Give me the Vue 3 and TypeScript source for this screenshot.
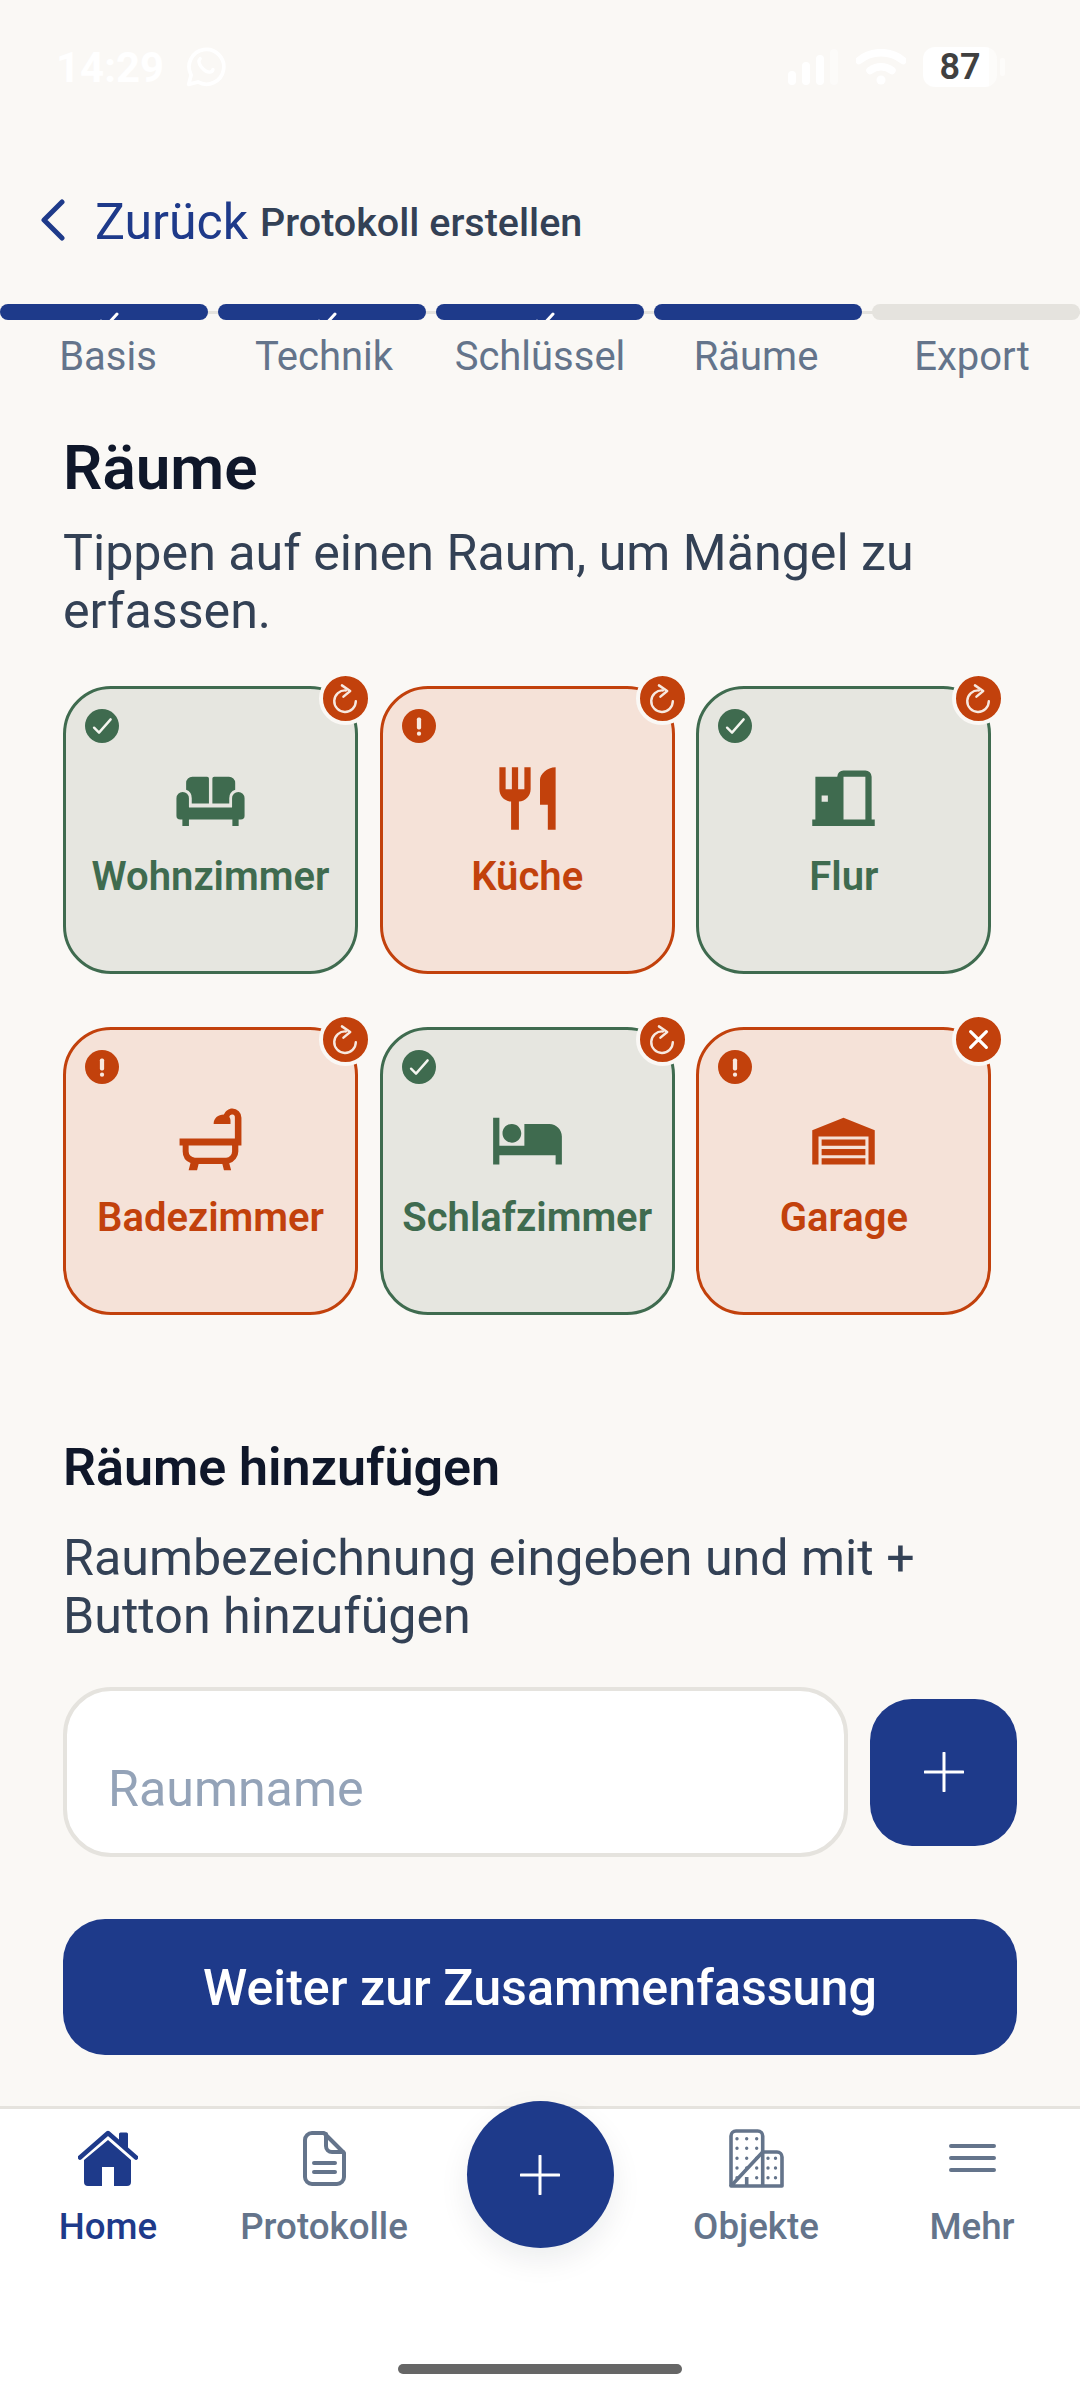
<template>
  <div class="screen">
    <div class="status-bar">
      <div class="status-left">
        <span class="time">14:29</span>
        <svg class="whatsapp" viewBox="0 0 38 38" fill="none" stroke="#fff" stroke-width="3.5" stroke-linejoin="round">
          <path d="M2.500 35.500l2.400-8.800A16.500 16.500 0 1 1 11.300 33.200z" />
          <path d="M13.500 11c-1.800 1.800-1.300 5 1.200 8.200 2.800 3.300 6.200 5.200 8.700 4.500 1.500-.4 2.200-1.400 2.200-2.500" stroke-width="3.200" stroke-linecap="round" />
        </svg>
      </div>
      <div class="status-right">
        <svg class="signal" viewBox="0 0 50 36" fill="#fff">
          <rect x="0" y="22" width="8" height="14" rx="4" />
          <rect x="14" y="13" width="8" height="23" rx="4" />
          <rect x="28" y="6" width="8" height="30" rx="4" />
          <rect x="42" y="0" width="8" height="36" rx="4" opacity="0.4" />
        </svg>
        <svg class="wifi" viewBox="0 0 50 36" fill="none" stroke="#fff" stroke-width="7.5" stroke-linecap="round">
          <path d="M3 11.500C15 1 35 1 47 11.500" />
          <path d="M14 21.500c6.500-5 15.500-5 22 0" />
          <circle cx="25" cy="31" r="4.500" fill="#fff" stroke="none" />
        </svg>
        <div class="battery">87</div>
        <div class="battery-cap"></div>
      </div>
    </div>

    <header class="top-bar">
      <svg class="chevron" viewBox="0 0 26 42" fill="none" stroke="#1e3a8a" stroke-width="5" stroke-linecap="round" stroke-linejoin="round">
        <path d="M22 3L4 21l18 18" />
      </svg>
      <span class="back-label">Zurück</span>
      <span class="top-title">Protokoll erstellen</span>
    </header>

    <div class="step-bars">
      <div v-for="step in steps" :key="step.label" :class="['step-bar', { done: step.active }]">
        <svg v-if="step.checked" class="step-check" viewBox="0 0 24 24" fill="none" stroke="#fff" stroke-width="3" stroke-linecap="round">
          <path d="M4 13l5 5L20 6" />
        </svg>
      </div>
    </div>
    <div class="step-labels">
      <span v-for="step in steps" :key="step.label">{{ step.label }}</span>
    </div>

    <main class="content">
      <h1 class="title">Räume</h1>
      <p class="hint">Tippen auf einen Raum, um Mängel zu erfassen.</p>

      <div class="room-grid">
        <div v-for="room in rooms" :key="room.name" :class="['room', room.ok ? 'ok' : 'bad']">
          <span class="status-dot">
            <svg v-if="room.ok" viewBox="0 0 24 24" fill="none" stroke="#f5f5f0" stroke-width="1.7" stroke-linecap="round" stroke-linejoin="round">
              <path d="M6.400 13.200l3.500 3.500 8.200-9.400" />
            </svg>
            <svg v-else viewBox="0 0 24 24" fill="#f8e8df">
              <rect x="10.500" y="6" width="3" height="8.500" rx="1.200" />
              <circle cx="12" cy="17.400" r="1.500" />
            </svg>
          </span>
          <span class="corner">
            <svg v-if="room.removable" viewBox="0 0 24 24" fill="none" stroke="#fff" stroke-width="1.700" stroke-linecap="round">
              <path d="M7.800 7.800l8.400 8.400M16.200 7.800l-8.400 8.400" />
            </svg>
            <svg v-else viewBox="0 0 24 24" fill="none" stroke="#f7e9e1" stroke-width="1.300" stroke-linecap="round" stroke-linejoin="round">
              <path d="M12.200 7.700A5.750 5.750 0 1 0 17.500 13.400" />
              <path d="M10.100 5l4.400 3-3.600 3" />
            </svg>
          </span>
          <svg class="room-icon" viewBox="0 0 24 24" fill="currentColor">
            <path :d="room.icon" fill-rule="evenodd" />
          </svg>
          <span class="room-name">{{ room.name }}</span>
        </div>
      </div>

      <h2 class="subtitle">Räume hinzufügen</h2>
      <p class="hint hint-add">Raumbezeichnung eingeben und mit + Button hinzufügen</p>

      <div class="add-row">
        <div class="room-input">Raumname</div>
        <button class="add-btn">
          <svg viewBox="0 0 40 40" stroke="#fff" stroke-width="3" stroke-linecap="round">
            <path d="M20 1v38M1 20h38" />
          </svg>
        </button>
      </div>

      <button class="next-btn">Weiter zur Zusammenfassung</button>
    </main>

    <nav class="tab-bar">
      <div class="tab active">
        <div class="tab-icon">
          <svg width="60" height="56" viewBox="0 0 60 56" fill="#1e3a8a">
            <path d="M41 4a1.500 1.500 0 0 1 1.500-1.500h6A1.500 1.500 0 0 1 50 4v17l-9-8z" />
            <path d="M30 10l23 20v22a4 4 0 0 1-4 4H36V37H24v19H10a4 4 0 0 1-4-4V30z" />
            <path d="M2 27.500L30 3l28 24.500" fill="none" stroke="#1e3a8a" stroke-width="4.500" stroke-linecap="round" stroke-linejoin="round" />
          </svg>
        </div>
        <span>Home</span>
      </div>
      <div class="tab">
        <div class="tab-icon">
          <svg width="43" height="55" viewBox="0 0 43 55" fill="none" stroke="#64748b" stroke-width="4" stroke-linejoin="round" stroke-linecap="round">
            <path d="M9 2h12l20 20v24a7 7 0 0 1-7 7H9a7 7 0 0 1-7-7V9a7 7 0 0 1 7-7z" />
            <path d="M23 3v12a6 6 0 0 0 6 6h11" />
            <path d="M11 32h21M11 41h21" />
          </svg>
        </div>
        <span>Protokolle</span>
      </div>
      <div class="tab fab-slot">
        <button class="fab">
          <svg viewBox="0 0 40 40" stroke="#fff" stroke-width="3" stroke-linecap="round">
            <path d="M20 1v38M1 20h38" />
          </svg>
        </button>
      </div>
      <div class="tab">
        <div class="tab-icon">
          <svg width="55" height="59" viewBox="0 0 55 59" fill="none" stroke="#64748b" stroke-width="3.600" stroke-linejoin="round">
            <path d="M2 57V7a5 5 0 0 1 5-5h21.700a5 5 0 0 1 5 5v50" />
            <path d="M33.700 23H48a5 5 0 0 1 5 5v29H2z" />
            <path d="M17.700 48v9" />
            <path d="M8 9.700v.01M17.700 9.700v.01M27.700 9.700v.01M8 19.300v.01M17.700 19.300v.01M27.700 19.300v.01M8 29.300v.01M17.700 29.300v.01M27.700 29.300v.01M8 39v.01M17.700 39v.01M27.700 39v.01M8 48.700v.01M27.700 48.700v.01M39 29.300v.01M46.500 29.300v.01M39 39v.01M46.500 39v.01M39 48.700v.01M46.500 48.700v.01" stroke-width="3.400" stroke-linecap="round" />
          </svg>
        </div>
        <span>Objekte</span>
      </div>
      <div class="tab">
        <div class="tab-icon">
          <svg width="47" height="32" viewBox="0 0 47 32" stroke="#64748b" stroke-width="4" stroke-linecap="round">
            <path d="M2 4h43M2 16h43M2 28h43" />
          </svg>
        </div>
        <span>Mehr</span>
      </div>
    </nav>
    <div class="home-indicator"></div>
  </div>
</template>

<script setup lang="ts">
interface Step {
  label: string
  active: boolean
  checked: boolean
}

interface Room {
  name: string
  ok: boolean
  removable?: boolean
  icon: string
}

const steps: Step[] = [
  { label: 'Basis', active: true, checked: true },
  { label: 'Technik', active: true, checked: true },
  { label: 'Schlüssel', active: true, checked: true },
  { label: 'Räume', active: true, checked: false },
  { label: 'Export', active: false, checked: false },
]

const sofa =
  'M4.200 7a2 2 0 0 1 2-2h4.700a.6.6 0 0 1 .6.6v8H6v-1.700a2.800 2.800 0 0 0-1.800-2.700zM12.600 5.600a.6.6 0 0 1 .6-.6h4.700a2 2 0 0 1 2 2v2.200a2.800 2.800 0 0 0-1.900 2.700v1.700h-5.400zM1.100 11.900a2 2 0 0 1 4 0v3h13.800v-3a2 2 0 0 1 4 0v5.600a1.200 1.200 0 0 1-1.200 1.200H21v2.100h-2v-2.100H5.100v2.100H3v-2.100h-.7a1.200 1.200 0 0 1-1.200-1.200z'
const cutlery =
  'M11 9H9V2H7v7H5V2H3v7c0 2.120 1.660 3.840 3.750 3.970V22h2.500v-9.030C11.340 12.840 13 11.120 13 9V2h-2v7zm5-3v8h2.500v8H21V2c-2.760 0-5 2.240-5 4z'
const door =
  'M3 5h7a2 2 0 0 1 2-2h7a2 2 0 0 1 2 2v13.700h1v2.100H2v-2.100h1zM12 5v13.700h7V5zM5 11v2h2v-2z'
const bath =
  'M13 7c0-1.800 1.400-3 3.300-3 .5-1.100 1.500-1.900 2.700-1.900A2.900 2.900 0 0 1 21.900 5v8.900h-1v1.900a4 4 0 0 1-2.900 3.800l.6 2.200h-2.300l-.5-2H8.200l-.5 2H5l.6-2.300a4 4 0 0 1-2.500-3.700v-1.900h-1v-2.200h17.700V5a.9.9 0 0 0-1.800-.2c.3.3.4.7.4 1.200v1zM5 13.900v1.900a2 2 0 0 0 2 2h10a2 2 0 0 0 1.900-2v-1.900z'
const bed =
  'M7 13c1.660 0 3-1.340 3-3S8.660 7 7 7s-3 1.340-3 3 1.340 3 3 3zm12-6h-8v7H3V5H1v15h2v-3h18v3h2v-9c0-2.210-1.790-4-4-4z'
const garage =
  'M22 9v11h-2V11H4v9H2V9l10-4zM19 12H5v2h14zM19 15H5v2h14zM19 18H5v2h14z'

const rooms: Room[] = [
  { name: 'Wohnzimmer', ok: true, icon: sofa },
  { name: 'Küche', ok: false, icon: cutlery },
  { name: 'Flur', ok: true, icon: door },
  { name: 'Badezimmer', ok: false, icon: bath },
  { name: 'Schlafzimmer', ok: true, icon: bed },
  { name: 'Garage', ok: false, removable: true, icon: garage },
]
</script>

<style>
html,
body {
  margin: 0;
  background: #faf8f5;
}
</style>

<style scoped>
.screen {
  width: 1080px;
  height: 2400px;
  overflow: hidden;
  position: relative;
  display: flex;
  flex-direction: column;
  background: #faf8f5;
  font-family: Roboto, "Noto Sans", sans-serif;
  color: #334155;
}

.status-bar {
  height: 66px;
  padding: 34px 75px 0 56px;
  display: flex;
  justify-content: space-between;
  align-items: center;
}

.status-left,
.status-right {
  display: flex;
  align-items: center;
}

.time {
  color: #fff;
  font-size: 42px;
  font-weight: 700;
}

.whatsapp {
  width: 40px;
  height: 40px;
  margin-left: 22px;
}

.signal {
  width: 50px;
  height: 36px;
  margin-right: 18px;
}

.wifi {
  width: 50px;
  height: 36px;
  margin-right: 17px;
}

.battery {
  width: 74px;
  height: 40px;
  border-radius: 12px;
  background: linear-gradient(90deg, #fff 89%, #fdfcfa 89%);
  color: #404040;
  font-size: 36px;
  font-weight: 600;
  line-height: 40px;
  text-align: center;
}

.battery-cap {
  width: 5px;
  height: 18px;
  margin-left: 3px;
  border-radius: 2px;
  background: #fdfcfa;
}

.top-bar {
  margin-top: 92px;
  height: 60px;
  padding-left: 40px;
  display: flex;
  align-items: center;
}

.chevron {
  width: 26px;
  height: 42px;
  margin-right: 29px;
  margin-bottom: 4px;
}

.back-label {
  color: #1e3a8a;
  font-size: 50px;
  line-height: 60px;
}

.top-title {
  margin-left: 12px;
  font-size: 39.5px;
  font-weight: 500;
}

.step-bars {
  margin-top: 52px;
  display: flex;
  gap: 10px;
  position: relative;
}

.step-bars::before {
  content: "";
  position: absolute;
  left: 0;
  right: 0;
  top: 7px;
  height: 3px;
  background: #e5e3de;
}

.step-bar {
  position: relative;
  flex: 1;
  height: 16px;
  overflow: hidden;
  border-radius: 8px;
  background: #e5e3de;
}

.step-bar.done {
  background: #1e3a8a;
}

.step-check {
  position: absolute;
  left: 97px;
  top: 4px;
  width: 24px;
  height: 24px;
}

.step-labels {
  margin-top: 14px;
  display: grid;
  grid-template-columns: repeat(5, 1fr);
  color: #64748b;
  font-size: 40px;
  line-height: 46px;
  text-align: center;
}

.content {
  flex: 1;
  padding: 52px 63px 0;
}

.title {
  margin: 0;
  color: #0f172a;
  font-size: 62px;
  font-weight: 600;
  line-height: 72px;
}

.hint {
  margin: 20px 0 0;
  font-size: 50.2px;
  line-height: 58px;
}

.hint-add {
  margin-top: 33px;
}

.room-grid {
  margin-top: 46px;
  display: grid;
  grid-template-columns: repeat(3, 295px);
  column-gap: 21.7px;
  row-gap: 53px;
}

.room {
  position: relative;
  height: 288px;
  box-sizing: border-box;
  border: 3px solid;
  border-radius: 48px;
  display: flex;
  flex-direction: column;
  align-items: center;
  padding-top: 72px;
}

.room.ok {
  border-color: #3f6b4f;
  background: #e6e6e0;
  color: #3f6b4f;
}

.room.bad {
  border-color: #c2410c;
  background: #f5e2d8;
  color: #c2410c;
}

.status-dot {
  position: absolute;
  left: 19px;
  top: 20px;
  width: 34px;
  height: 34px;
  border-radius: 50%;
  background: currentColor;
}

.status-dot svg {
  display: block;
  width: 34px;
  height: 34px;
}

.corner {
  position: absolute;
  right: -17px;
  top: -17px;
  width: 45px;
  height: 45px;
  border: 4px solid #faf8f5;
  border-radius: 50%;
  background: #c2410c;
}

.corner svg {
  display: block;
  width: 45px;
  height: 45px;
}

.room-icon {
  flex: none;
  width: 75px;
  height: 75px;
}

.room-name {
  margin-top: 18px;
  font-size: 40px;
  font-weight: 600;
  line-height: 46px;
}

.subtitle {
  margin: 125px 0 0;
  color: #0f172a;
  font-size: 52px;
  font-weight: 600;
  line-height: 56px;
}

.add-row {
  margin-top: 42px;
  display: flex;
  align-items: center;
  gap: 22px;
}

.room-input {
  flex: 1;
  height: 170px;
  box-sizing: border-box;
  border: 4px solid #e5e3de;
  border-radius: 48px;
  background: #fff;
  color: #94a3b8;
  font-size: 50.2px;
  line-height: 56px;
  padding: 70px 0 0 41px;
}

.add-btn {
  width: 147px;
  height: 147px;
  padding: 0;
  border: 0;
  border-radius: 42px;
  background: #1e3a8a;
  display: flex;
  align-items: center;
  justify-content: center;
}

.add-btn svg,
.fab svg {
  width: 40px;
  height: 40px;
}

.next-btn {
  display: block;
  width: 100%;
  height: 136px;
  margin-top: 62px;
  border: 0;
  border-radius: 42px;
  background: #1e3a8a;
  color: #fff;
  font-family: inherit;
  font-size: 50.2px;
  font-weight: 500;
}

.tab-bar {
  height: 294px;
  box-sizing: border-box;
  border-top: 3px solid #e5e3de;
  background: #fff;
  display: grid;
  grid-template-columns: repeat(5, 1fr);
  position: relative;
}

.tab {
  height: 139px;
  display: flex;
  flex-direction: column;
  align-items: center;
  justify-content: flex-end;
  color: #64748b;
  font-size: 36.7px;
  font-weight: 500;
  line-height: 42px;
}

.tab.active {
  color: #1e3a8a;
}

.tab-icon {
  height: 60px;
  margin-bottom: 18px;
  display: flex;
  align-items: center;
}

.fab-slot {
  justify-content: flex-start;
}

.fab {
  position: absolute;
  top: -8px;
  width: 147px;
  height: 147px;
  padding: 0;
  border: 0;
  border-radius: 50%;
  background: #1e3a8a;
  box-shadow: 0 12px 30px rgba(15, 23, 42, 0.08);
  display: flex;
  align-items: center;
  justify-content: center;
}

.home-indicator {
  position: absolute;
  left: 398px;
  bottom: 26px;
  width: 284px;
  height: 10px;
  border-radius: 5px;
  background: #666;
}
</style>
